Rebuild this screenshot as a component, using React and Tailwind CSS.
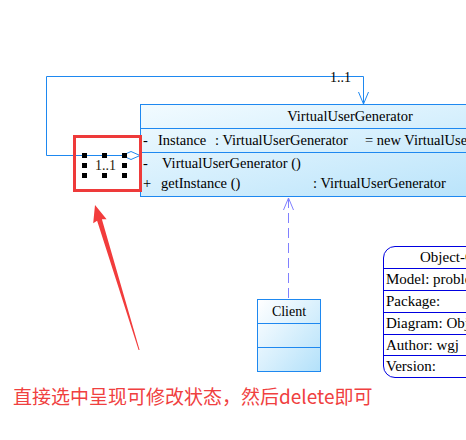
import React from "react";

const serif = { fontFamily: '"Liberation Serif", "Times New Roman", serif' };

export default function App() {
  return (
    <div
      className="relative w-[466px] h-[440px] bg-white overflow-hidden text-black"
      style={serif}
    >
      {/* connectors */}
      <svg className="absolute inset-0" width="466" height="440" viewBox="0 0 466 440">
        <path d="M140 155.5 H46.5 V76.5 H363.5 V104" fill="none" stroke="#1e88f0" strokeWidth="1" />
        <polyline points="358.5,92 363.5,104 368.5,92" fill="none" stroke="#1e88f0" strokeWidth="1" />
        <polygon points="122,155.5 131,151.5 140,155.5 131,159.5" fill="white" stroke="#1e88f0" strokeWidth="1" />
        <line x1="288.5" y1="198" x2="288.5" y2="300" stroke="#8080ff" strokeWidth="1" strokeDasharray="10 5" />
        <polyline points="283.5,210 288.5,198 293.5,210" fill="none" stroke="#8080ff" strokeWidth="1" />
      </svg>

      {/* loop label */}
      <div className="absolute left-[330px] top-[70px] text-[14px] leading-[16px]">1..1</div>

      {/* main class */}
      <div className="absolute left-[140px] top-[104px] w-[420px] h-[93px] border border-[#1e88f0] bg-linear-to-br from-[#f2fbff] to-[#b3e1fa] box-border text-[14.5px]">
        <div className="h-[24px] border-b border-[#1e88f0] flex items-center justify-center">
          VirtualUserGenerator
        </div>
        <div className="h-[24px] border-b border-[#1e88f0] flex items-center pl-[2px] whitespace-nowrap">
          <span className="w-[15px]">-</span>
          <span className="w-[57px]">Instance</span>
          <span className="w-[150px]">: VirtualUserGenerator</span>
          <span>= new VirtualUserGenerator ()</span>
        </div>
        <div className="pt-[1px] whitespace-nowrap">
          <div className="h-[20px] flex items-center pl-[2px]">
            <span className="w-[19px]">-</span>
            <span>VirtualUserGenerator ()</span>
          </div>
          <div className="h-[20px] flex items-center pl-[2px]">
            <span className="w-[18px]">+</span>
            <span className="w-[152px]">getInstance ()</span>
            <span>: VirtualUserGenerator</span>
          </div>
        </div>
      </div>

      {/* client */}
      <div className="absolute left-[257px] top-[299px] w-[64px] h-[73px] border border-[#1e88f0] bg-linear-to-br from-white to-[#b3e1fa] box-border text-[14px]">
        <div className="h-[24px] border-b border-[#1e88f0] flex items-center justify-center">Client</div>
        <div className="h-[24px] border-b border-[#1e88f0]" />
        <div className="h-[23px]" />
      </div>

      {/* object info box */}
      <div className="absolute left-[383px] top-[246px] w-[180px] border border-[#0000e0] rounded-[12px] bg-white overflow-hidden box-border text-[15px] whitespace-nowrap">
        <div className="h-[22px] border-b border-[#0000e0] flex items-center pl-[36px]">Object-Oriented Model</div>
        <div className="h-[22px] border-b border-[#0000e0] flex items-center pl-[2px]">Model: problem domain</div>
        <div className="h-[22px] border-b border-[#0000e0] flex items-center pl-[2px]">Package:</div>
        <div className="h-[22px] border-b border-[#0000e0] flex items-center pl-[2px]">Diagram: ObjectDiagram</div>
        <div className="h-[21px] border-b border-[#0000e0] flex items-center pl-[2px]">Author: wgj</div>
        <div className="h-[21px] flex items-center pl-[2px]">Version:</div>
      </div>

      {/* selected label with handles */}
      <div className="absolute left-[95px] top-[158px] text-[14px] leading-[16px] text-[#2b1a08]">1..1</div>
      {[
        [82, 153], [102, 153], [122, 153],
        [82, 163], [122, 163],
        [82, 173], [102, 173], [122, 173],
      ].map(([x, y], i) => (
        <div
          key={i}
          className="absolute w-[5px] h-[5px] bg-black"
          style={{ left: x, top: y }}
        />
      ))}

      {/* red highlight box */}
      <div className="absolute left-[73px] top-[135px] w-[69px] h-[57px] border-[3px] border-[#ee3a3a] box-border" />

      {/* red arrow */}
      <svg className="absolute inset-0 pointer-events-none" width="466" height="440" viewBox="0 0 466 440">
        <polygon
          points="95,205 106.6,219.3 101.9,219.3 139.6,350 138.6,350 97.1,220.7 93.2,223.3"
          fill="#f23c3c"
        />
      </svg>

      {/* caption */}
      <div
        className="absolute left-[13px] top-[384px] text-[19px] leading-[24px] text-[#f04040] whitespace-nowrap"
        style={{ fontFamily: '"Noto Sans CJK SC", "Noto Sans", sans-serif' }}
      >
        直接选中呈现可修改状态，然后delete即可
      </div>
    </div>
  );
}
